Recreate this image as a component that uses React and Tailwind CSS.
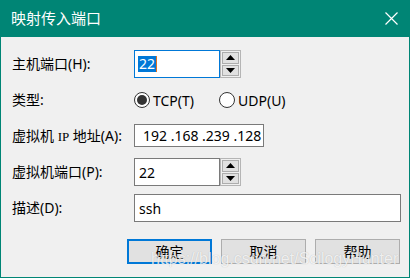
import React from "react";

const font = { fontFamily: '"Segoe UI","Noto Sans","Noto Sans CJK SC",sans-serif' };

function Spinner() {
  return (
    <div className="flex flex-col w-[21px] h-full border border-[#b5b5b5] bg-[#f0f0f0] p-[1px] gap-[1px]">
      <div className="flex-1 bg-[#e1e1e1] border border-[#adadad] flex items-center justify-center">
        <svg width="9" height="5" viewBox="0 0 9 5"><path d="M4.5 0 L9 5 L0 5 Z" fill="#000" /></svg>
      </div>
      <div className="flex-1 bg-[#e1e1e1] border border-[#adadad] flex items-center justify-center">
        <svg width="9" height="5" viewBox="0 0 9 5"><path d="M0 0 L9 0 L4.5 5 Z" fill="#000" /></svg>
      </div>
    </div>
  );
}

function Label({ children }) {
  return <div className="w-[122px] shrink-0 text-[14px] text-black leading-none">{children}</div>;
}

function Radio({ checked, label }) {
  return (
    <div className="flex items-center gap-[3px]">
      <div className="w-[16px] h-[16px] rounded-full border border-[#333] bg-white flex items-center justify-center">
        {checked && <div className="w-[10px] h-[10px] rounded-full bg-[#333]" />}
      </div>
      <span className="text-[14px] text-black">{label}</span>
    </div>
  );
}

function Button({ children, primary }) {
  return (
    <div
      className={
        "w-[85px] h-[25px] bg-[#e1e1e1] flex items-center justify-center text-[14px] text-black " +
        (primary ? "border-2 border-[#0078d7]" : "border border-[#adadad]")
      }
    >
      {children}
    </div>
  );
}

export default function App() {
  return (
    <div className="w-[412px] h-[279px] bg-white" style={font}>
      <div className="relative w-[410px] h-[278px] border border-[#008575] border-t-0 bg-[#f0f0f0] flex flex-col">
        <div className="h-[37px] bg-[#008575] flex items-center justify-between pl-[11px] pr-[12px] -mx-[1px]">
          <span className="text-white text-[15px]">映射传入端口</span>
          <svg width="13" height="13" viewBox="0 0 13 13">
            <path d="M0.5 0.5 L12.5 12.5 M12.5 0.5 L0.5 12.5" stroke="#fff" strokeWidth="1.2" />
          </svg>
        </div>

        <div className="flex flex-col pl-[11px]">
          <div className="flex items-center mt-[13px] h-[28px]">
            <Label>主机端口(H):</Label>
            <div className="flex h-[28px]">
              <div className="w-[86px] h-full border border-[#0078d7] bg-white flex items-center pl-[3px]">
                <span className="bg-[#0078d7] text-white text-[14px] leading-[16px] px-[1px]">22</span>
                <span className="w-[1px] h-[16px] bg-[#e07020]" />
              </div>
              <Spinner />
            </div>
          </div>

          <div className="flex items-center mt-[11px] h-[22px]">
            <Label>类型:</Label>
            <div className="flex items-center gap-[25px]">
              <Radio checked label="TCP(T)" />
              <Radio label="UDP(U)" />
            </div>
          </div>

          <div className="flex items-center mt-[13px] h-[23px]">
            <Label>
              虚拟机 <span style={{ fontFamily: '"Liberation Serif",serif' }} className="text-[13px]">IP</span> 地址(A):
            </Label>
            <div className="w-[130px] h-[23px] border border-[#7a7a7a] bg-white flex items-center pl-[8px] text-[14px] text-black whitespace-pre">
              192 .168 .239 .128
            </div>
          </div>

          <div className="flex items-center mt-[11px] h-[28px]">
            <Label>虚拟机端口(P):</Label>
            <div className="flex h-[28px]">
              <div className="w-[86px] h-full border border-[#7a7a7a] bg-white flex items-center pl-[4px] text-[14px] text-black">
                22
              </div>
              <Spinner />
            </div>
          </div>

          <div className="flex items-center mt-[8px] h-[28px]">
            <Label>描述(D):</Label>
            <div className="w-[267px] h-[28px] border border-[#7a7a7a] bg-white flex items-center pl-[4px] text-[14px] text-black">
              ssh
            </div>
          </div>

          <div className="flex mt-[17px] pl-[115px] gap-[9px]">
            <Button primary>确定</Button>
            <Button>取消</Button>
            <Button>帮助</Button>
          </div>
        </div>

        <div
          className="absolute left-[150px] top-[247px] text-[16px] text-white/80 pointer-events-none"
          style={{ fontFamily: '"Liberation Sans",sans-serif', textShadow: "0 0 1px rgba(0,0,0,0.25)" }}
        >
          https://blog.csdn.net/ScilogyHunter
        </div>
      </div>
    </div>
  );
}
